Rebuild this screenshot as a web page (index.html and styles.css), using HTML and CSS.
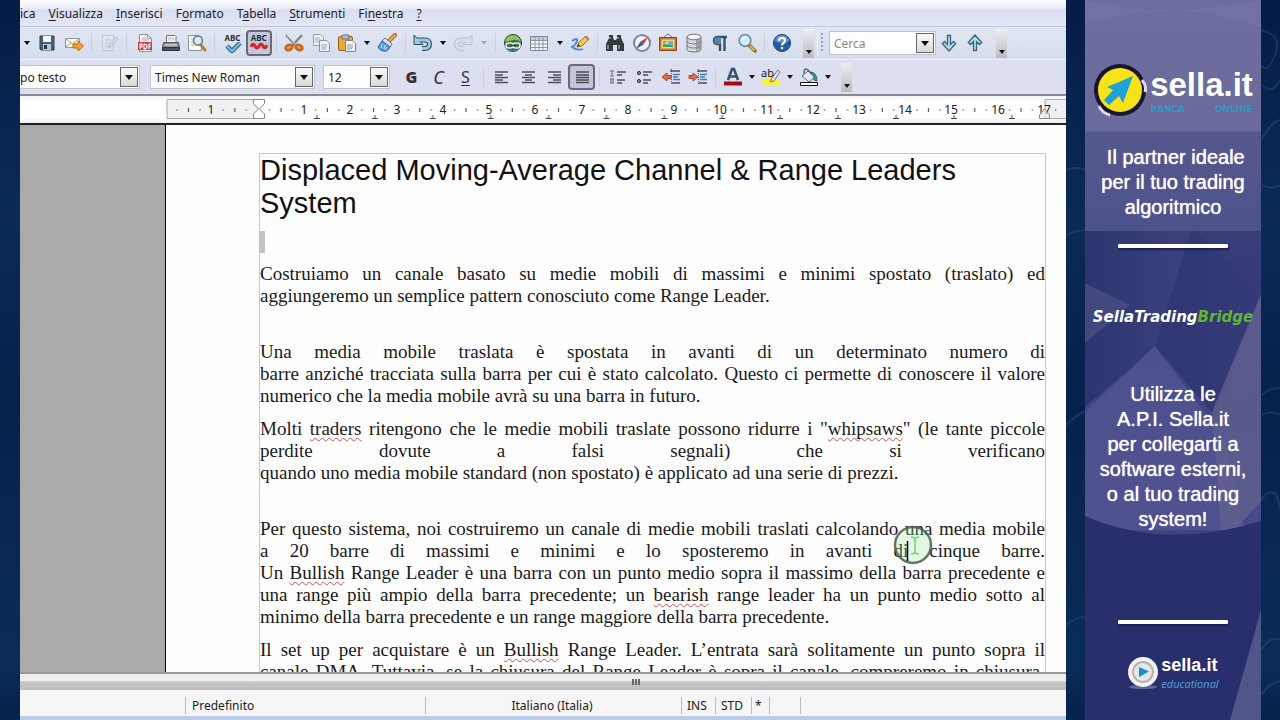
FILE: index.html
```html
<!DOCTYPE html>
<html lang="it">
<head>
<meta charset="utf-8">
<title>Displaced Moving-Average Channel</title>
<link rel="stylesheet" href="styles.css">
</head>
<body>
<div class="stage">
<main class="editor">
  <nav class="menubar">
    <button>ica</button><button><u>V</u>isualizza</button><button><u>I</u>nserisci</button><button>F<u>o</u>rmato</button><button>T<u>a</u>bella</button><button><u>S</u>trumenti</button><button>Fi<u>n</u>estra</button><button><u>?</u></button>
  </nav>

  <div class="toolbar">
    <div class="tools standard">
      <button class="drop" aria-label="Apri menu"></button>
      <button class="tool" aria-label="Salva"><svg viewBox="0 0 20 20"><path d="M3 3h14v14H4l-1-1z" fill="#476078" stroke="#2c4054"/><path d="M6 3h8v6H6z" fill="#f4f8fa"/><path d="M6 11h8v6H6z" fill="#b9c8d2"/><path d="M7 12h3v4H7z" fill="#263949"/></svg></button>
      <button class="tool" aria-label="E-mail"><svg viewBox="0 0 20 20"><path d="M1.500 5.500h14v9h-14z" fill="#fbf8ed" stroke="#9c9686"/><path d="M2 6l6.500 5L15 6M2 14l5-4.500M15 14l-5-4.500" fill="none" stroke="#aaa38f"/><path d="M9 11h5V8l5.500 5-5.500 5v-3H9z" fill="#f8a62b" stroke="#b56a12"/></svg></button>
      <span class="sep"></span>
      <button class="tool" aria-label="Modifica file"><svg viewBox="0 0 20 20" opacity=".4"><path d="M3.500 2.500h11v15h-11z" fill="#e7e9f1" stroke="#9aa0ac"/><path d="M6 7h6M6 10h5M6 13h3" stroke="#8e96a4"/><path d="M9 15l1-3 7-8 2 2-7 8z" fill="#c5cad4" stroke="#8e96a4"/></svg></button>
      <span class="sep"></span>
      <button class="tool" aria-label="Esporta PDF"><svg viewBox="0 0 20 20"><path d="M4.500 1.500h8l4 4v13h-12z" fill="#f5f5f7" stroke="#8d9098"/><path d="M12.500 1.500v4h4M7 5h4M7 7h7" fill="none" stroke="#aaa"/><path d="M3 9h14v8H3z" fill="#d7373c"/><path d="M5 16v-5h2v3H5M9 11v5q3 0 3-2.500T9 11M14 16v-5h2M14 13.500h2" fill="none" stroke="#fff" stroke-width="1.200"/></svg></button>
      <button class="tool" aria-label="Stampa"><svg viewBox="0 0 20 20"><path d="M5.500 9V2.500h8.500l1 1V9" fill="#fff" stroke="#687078"/><path d="M7 5h6M7 7h6" stroke="#bbb"/><path d="M2.500 9.500h15l1 5h-17z" fill="#8c939b" stroke="#4b535c"/><path d="M1.500 14.500h17v3h-17z" fill="#4a525a" stroke="#30363d"/><path d="M4 12h12" stroke="#e5e9ec"/></svg></button>
      <button class="tool" aria-label="Anteprima"><svg viewBox="0 0 20 20"><path d="M1.500 2.500h10l3 3v12h-13z" fill="#fbfbfb" stroke="#8e949c"/><path d="M4 6h4M4 9h3M4 12h3" stroke="#aaa"/><path d="M13 11l5 6" stroke="#b5832d" stroke-width="3" stroke-linecap="round"/><circle cx="11" cy="7.500" r="4.500" fill="#d6ebf7" stroke="#68747f" stroke-width="1.500"/></svg></button>
      <span class="sep"></span>
      <button class="tool abc" aria-label="Controllo ortografico"><span>ABC</span><svg viewBox="0 0 18 11"><path d="M3 4l5 5 8-8" fill="none" stroke="#26607e" stroke-width="4.500"/><path d="M3 4l5 5 8-8" fill="none" stroke="#74bddd" stroke-width="2.400"/></svg></button>
      <button class="tool abc on" aria-label="Controllo automatico"><span>ABC</span><svg viewBox="0 0 18 11"><path d="M1 5q2-5 4-1t4 0 4 0 4-1" fill="none" stroke="#d8232b" stroke-width="3"/></svg></button>
      <span class="sep"></span>
      <button class="tool" aria-label="Taglia"><svg viewBox="0 0 20 20"><path d="M2 2l11 12M18 2L7 14" stroke="#76808b" stroke-width="2"/><path d="M3 2l9 10" stroke="#dfe5ea"/><ellipse cx="5" cy="14.500" rx="3.500" ry="2.500" fill="#e9a25c" stroke="#c2691d" stroke-width="2.600" transform="rotate(-25 5 14.500)"/><ellipse cx="15" cy="14.500" rx="3.500" ry="2.500" fill="#e9a25c" stroke="#c2691d" stroke-width="2.600" transform="rotate(25 15 14.500)"/></svg></button>
      <button class="tool" aria-label="Copia"><svg viewBox="0 0 20 20" opacity=".8"><path d="M2.500 1.500h7l3 3v8h-10z" fill="#f5f6f8" stroke="#87909b"/><path d="M4 5h5M4 7h6M4 9h4" stroke="#9ba3ae"/><path d="M8.500 7.500h7l3 3v8h-10z" fill="#f5f6f8" stroke="#77828e"/><path d="M10 12h6M10 14h6M10 16h5" stroke="#8c97a4"/></svg></button>
      <button class="tool" aria-label="Incolla"><svg viewBox="0 0 20 20"><rect x="1.500" y="3.500" width="14" height="14" rx="1.500" fill="#e9a93b" stroke="#966018"/><path d="M5 2h7v4H5z" fill="#b7bdc3" stroke="#6e7276"/><path d="M8.500 7.500h7l3 3v8h-10z" fill="#f4f5f8" stroke="#77828e"/><path d="M10 12h6M10 14h6M10 16h5" stroke="#8c97a4"/></svg></button>
      <button class="drop" aria-label="Opzioni incolla"></button>
      <button class="tool" aria-label="Pennello"><svg viewBox="0 0 20 20"><path d="M12 8l6-6" stroke="#a66a1f" stroke-width="4" stroke-linecap="round"/><path d="M12 8l6-6" stroke="#edb34c" stroke-width="2" stroke-linecap="round"/><path d="M8 5l7 6-2 3-8-6z" fill="#d9e3ee" stroke="#62758e"/><path d="M5 8l8 6q-2 5-7 4-4-1-5-4z" fill="#5b9fdf" stroke="#2e67a6"/><path d="M5 11l-1 4M8 12l-1 4M10 14l-2 3" stroke="#c2e1fa"/></svg></button>
      <span class="sep"></span>
      <button class="tool" aria-label="Annulla"><svg viewBox="0 0 20 20"><path d="M4 7h8q4.500 0 4.500 4T12 15.500H9" fill="none" stroke="#294e6b" stroke-width="5"/><path d="M1 2v9.500h9z" fill="#9bcbe1" stroke="#294e6b"/><path d="M4 7h8q4.500 0 4.500 4T12 15.500H9" fill="none" stroke="#9bcbe1" stroke-width="2.800"/></svg></button>
      <button class="drop" aria-label="Cronologia annulla"></button>
      <button class="tool" aria-label="Ripristina" disabled><svg viewBox="0 0 20 20" opacity=".4"><path d="M16 7H8q-4.500 0-4.500 4T8 15.500h3" fill="none" stroke="#89919d" stroke-width="5"/><path d="M19 2v9.500h-9z" fill="#d6dae3" stroke="#89919d"/><path d="M16 7H8q-4.500 0-4.500 4T8 15.500h3" fill="none" stroke="#d6dae3" stroke-width="3"/></svg></button>
      <button class="drop dim" aria-label="Cronologia ripristina"></button>
      <span class="sep"></span>
      <button class="tool" aria-label="Collegamento"><svg viewBox="0 0 20 20"><circle cx="10" cy="10" r="8.500" fill="#416c55" stroke="#274631"/><path d="M2 9Q4 2 10 2t8 7q-4-3-8-2T2 9z" fill="#8cc65c"/><path d="M3 15q7 5 14 0-2 3-7 3.500T3 15z" fill="#4982ae"/><rect x="3" y="10" width="7" height="5" rx="2.500" fill="none" stroke="#e7efdf" stroke-width="1.600"/><rect x="10" y="10" width="7" height="5" rx="2.500" fill="none" stroke="#e7efdf" stroke-width="1.600"/><path d="M8 12.500h4" stroke="#203020" stroke-width="1.500"/></svg></button>
      <button class="tool" aria-label="Tabella"><svg viewBox="0 0 20 20"><path d="M1.500 3.500h17v14h-17z" fill="#fbfcfe" stroke="#7d8797"/><path d="M2 4h16v3H2z" fill="#c4cedd"/><path d="M2 7.500h16M2 11h16M2 14.500h16M6 4v13M10 4v13M14 4v13" stroke="#8b96a5"/></svg></button>
      <button class="drop" aria-label="Opzioni tabella"></button>
      <button class="tool" aria-label="Disegno"><svg viewBox="0 0 20 20"><path d="M2 8q6-4 5 0T2 14q5 4 11 2" fill="none" stroke="#4c86d3" stroke-width="1.800"/><path d="M7 14l2-5 7-6 3 3-7 7z" fill="#f5c947" stroke="#9c6f24"/><path d="M15 4l3 3 1-1-3-3z" fill="#d75f69"/><path d="M7 14l1-3 2 2z" fill="#333"/></svg></button>
      <span class="sep"></span>
      <button class="tool" aria-label="Trova"><svg viewBox="0 0 20 20"><path d="M4 2h4v3l1 2h2l1-2V2h4v3l3 6v7h-7v-6H8v6H1v-7l3-6z" fill="#343a3e"/><path d="M3 12v4M14 12v4M5 4v2M13 4v2" stroke="#9aa4aa" stroke-width="1.400"/></svg></button>
      <button class="tool" aria-label="Navigatore"><svg viewBox="0 0 20 20"><circle cx="10" cy="10" r="8" fill="#f0f5fb" stroke="#7b8894" stroke-width="2"/><path d="M16 4l-4.500 7.500-3-3z" fill="#d83c3c"/><path d="M4 16l4.500-7.500 3 3z" fill="#315b9c"/></svg></button>
      <button class="tool" aria-label="Galleria"><svg viewBox="0 0 20 20"><path d="M6 4l4-3 4 3" fill="none" stroke="#777"/><path d="M1.500 4.500h17v13h-17z" fill="#ca7730" stroke="#8a4819"/><path d="M3.500 6.500h13v9h-13z" fill="#f3d48a"/><path d="M5 8h10v6H5z" fill="#58b7e4"/><path d="M5 14v-2l4-1 6 2v1z" fill="#44a04b"/><circle cx="9" cy="10" r="1.500" fill="#f8e35e"/></svg></button>
      <button class="tool" aria-label="Sorgenti dati"><svg viewBox="0 0 20 20"><path d="M3 4v12q0 3 7 3t7-3V4z" fill="#d9dbdd" stroke="#6f7479"/><path d="M12 6v12q5-1 5-3V4z" fill="#a1a6aa"/><ellipse cx="10" cy="4" rx="7" ry="2.800" fill="#f8f8f8" stroke="#6f7479"/><path d="M3 8q1 3 7 3t7-3M3 12q1 3 7 3t7-3" fill="none" stroke="#777c80"/></svg></button>
      <button class="tool" aria-label="Caratteri non stampabili"><svg viewBox="0 0 20 20"><path d="M17 4H8Q4 4 4 7.500T8 11h2v7M14.500 4v14" fill="none" stroke="#31536a" stroke-width="2.400"/><path d="M8 4h3v7H8q-4 0-4-3.500T8 4z" fill="#5a8299"/></svg></button>
      <button class="tool" aria-label="Zoom"><svg viewBox="0 0 20 20"><path d="M12 12l6 6" stroke="#8e6324" stroke-width="3.500" stroke-linecap="round"/><path d="M13 13l4.500 4.500" stroke="#e9b34d" stroke-width="2"/><circle cx="8" cy="7.500" r="5.800" fill="#d4edfb" stroke="#6d90ae" stroke-width="1.700"/><path d="M5 7q1-3 4-3" fill="none" stroke="#fff" stroke-width="1.500"/></svg></button>
      <span class="sep"></span>
      <button class="tool" aria-label="Guida"><svg viewBox="0 0 20 20"><circle cx="10" cy="10" r="8.500" fill="#275ba5" stroke="#173b78"/><path d="M2.500 8Q4 2 10 2t7.500 6Q10 12 2.500 8z" fill="#5d8dca"/><path d="M7 8q0-3.200 3-3.200T13 7.500Q13 9 11.500 10T10 12.500M10 14v2.200" fill="none" stroke="#fff" stroke-width="2.200"/></svg></button>
    </div>
    <button class="more" aria-label="Altri comandi"></button>
    <div class="find">
      <span class="grip"></span>
      <span class="combo search"><input type="text" placeholder="Cerca" aria-label="Cerca"><span class="knob"></span></span>
      <button class="tool" aria-label="Successivo"><svg viewBox="0 0 20 20"><path d="M8.500 2.500h3v9l3-3 2.200 2L10 18l-6.700-7.500 2.200-2 3 3z" fill="#b9dceb" stroke="#39637d" stroke-width="1.300"/></svg></button>
      <button class="tool" aria-label="Precedente"><svg viewBox="0 0 20 20"><path d="M8.500 17.500h3v-9l3 3 2.200-2L10 2 3.300 9.500l2.200 2 3-3z" fill="#b9dceb" stroke="#39637d" stroke-width="1.300"/></svg></button>
    </div>
    <button class="more" aria-label="Altri comandi di ricerca"></button>
  </div>

  <div class="toolbar second">
    <span class="combo style"><select aria-label="Stile"><option>po testo</option></select><span class="knob"></span></span>
    <span class="combo font"><select aria-label="Carattere"><option>Times New Roman</option></select><span class="knob"></span></span>
    <span class="combo size"><select aria-label="Dimensione"><option>12</option></select><span class="knob"></span></span>
    <div class="tools format">
      <button class="tool letter bold">G</button><button class="tool letter italic">C</button><button class="tool letter under">S</button>
      <span class="sep"></span>
      <button class="tool" aria-label="Sinistra"><svg viewBox="0 0 20 20"><path d="M4 5h13M4 8h8M4 10.500h13M4 13h8M4 15.500h13" class="rule"/></svg></button>
      <button class="tool" aria-label="Centrato"><svg viewBox="0 0 20 20"><path d="M4 5h13M7 8h7M4 10.500h13M7 13h7M4 15.500h13" class="rule"/></svg></button>
      <button class="tool" aria-label="Destra"><svg viewBox="0 0 20 20"><path d="M3 5h13M8 8h8M3 10.500h13M8 13h8M3 15.500h13" class="rule"/></svg></button>
      <button class="tool on" aria-label="Giustificato"><svg viewBox="0 0 20 20"><path d="M4 5h13M4 8h13M4 10.500h13M4 13h13M4 15.500h13" class="rule"/></svg></button>
      <span class="sep"></span>
      <button class="tool" aria-label="Elenco numerato"><svg viewBox="0 0 20 20"><path d="M3 4h4M5 4v5M3 9h4M3 12h4M4 12v4M6 12v4M3 16h4" stroke="#667" fill="none"/><path d="M10 5h9M10 8h5M10 13h8M10 16h5" class="rule"/></svg></button>
      <button class="tool" aria-label="Elenco puntato"><svg viewBox="0 0 20 20"><circle cx="5" cy="6" r="1.600" fill="#889" stroke="#334"/><circle cx="5" cy="14" r="1.600" fill="#889" stroke="#334"/><path d="M9 5h9M9 8h5M9 13h8M9 16h5" class="rule"/></svg></button>
      <button class="tool" aria-label="Riduci rientro"><svg viewBox="0 0 20 20"><path d="M9 4h10M11 16h8" class="rule"/><path d="M12 7.500h7M12 10h5M12 12.500h7" stroke="#3f82b8" stroke-width="1.600"/><path d="M10.500 2v16" stroke="#555" stroke-dasharray="1 1"/><path d="M1 10l5-4v2.500h4v3H6V14z" fill="#df6c4e" stroke="#a74531"/></svg></button>
      <button class="tool" aria-label="Aumenta rientro"><svg viewBox="0 0 20 20"><path d="M9 4h10M11 16h8" class="rule"/><path d="M12 7.500h7M12 10h5M12 12.500h7" stroke="#3f82b8" stroke-width="1.600"/><path d="M10.500 2v16" stroke="#555" stroke-dasharray="1 1"/><path d="M10 10L5 6v2.500H1v3h4V14z" fill="#df6c4e" stroke="#a74531"/></svg></button>
      <span class="sep"></span>
      <button class="tool" aria-label="Colore carattere"><svg viewBox="0 0 20 20"><path d="M5 13l4-11h2l4 11M7 9.500h6" fill="none" stroke="#34576b" stroke-width="2.600"/><path d="M1 14.500h18v4H1z" fill="#a50b12"/></svg></button>
      <button class="drop" aria-label="Scegli colore carattere"></button>
      <button class="tool mark" aria-label="Evidenziatore"><svg viewBox="0 0 20 20"><ellipse cx="10" cy="15" rx="9.500" ry="4" fill="#fbf238"/><path d="M10 12l7-9 2 2-6 9-4 1z" fill="#e5e7eb" stroke="#687078"/><path d="M9 15l1-3 2 2z" fill="#d8b91b"/></svg><span>ab</span></button>
      <button class="drop" aria-label="Scegli evidenziatore"></button>
      <button class="tool" aria-label="Sfondo paragrafo"><svg viewBox="0 0 20 20"><path d="M5 7V4q1-3 4-1l5 5" fill="none" stroke="#555e68" stroke-width="1.300"/><path d="M3 9l6-5 7 6-6 5z" fill="#e3e9ed" stroke="#536473"/><path d="M12 5q6 1 6 9l-3-1q1-5-4-7z" fill="#3d93a0" stroke="#286270"/><path d="M1.500 15.500h17v3h-17z" fill="#fff" stroke="#111"/></svg></button>
      <button class="drop" aria-label="Scegli sfondo"></button>
    </div>
    <button class="more" aria-label="Altri comandi di formato"></button>
  </div>

  <svg class="ruler" aria-label="Righello">
    <defs>
      <pattern id="cm" x="258" y="94" width="46.250" height="29" patternUnits="userSpaceOnUse"><path d="M11.500 15v2M34.500 15v2" stroke="#777"/><path d="M23 14v4" stroke="#333"/></pattern>
      <pattern id="tabs" x="288" y="94" width="57.900" height="29" patternUnits="userSpaceOnUse"><path d="M26 24.500h6M29 21v3" stroke="#444"/></pattern>
    </defs>
    <g transform="translate(-20 -96)">
      <path d="M167 99.500h92v19h-92z" fill="#f1f1f1" stroke="#aaa"/>
      <path d="M1066 99.500h-21v19h21" fill="#f1f1f1" stroke="#aaa"/>
      <path d="M168 100h898v17H168z" fill="url(#cm)"/>
      <path d="M288 110h750v11H288z" fill="url(#tabs)"/>
      <g class="digits"><text x="211" y="114">1</text><text x="304" y="114">1</text><text x="350" y="114">2</text><text x="397" y="114">3</text><text x="443" y="114">4</text><text x="489" y="114">5</text><text x="535" y="114">6</text><text x="582" y="114">7</text><text x="628" y="114">8</text><text x="674" y="114">9</text><text x="720" y="114">10</text><text x="767" y="114">11</text><text x="813" y="114">12</text><text x="859" y="114">13</text><text x="905" y="114">14</text><text x="951" y="114">15</text><text x="998" y="114">16</text><text x="1044" y="114">17</text></g>
      <path d="M253.500 99.500h11v4l-5 5.500 5 5v4.500h-11V114l5-5-5-5.500z" fill="#fff" stroke="#888"/>
      <path d="M1039.500 118.500V115l5-6 5 6v3.500z" fill="#eee" fill-opacity=".6" stroke="#888"/>
    </g>
  </svg>

  <div class="canvas">
    <article class="page">
      <div class="frame">
        <h1>Displaced Moving-Average Channel &amp; Range Leaders<br>System</h1>
        <div class="blank"><span class="field"></span></div>
        <p><span class="line">Costruiamo un canale basato su medie mobili di massimi e minimi spostato (traslato) ed</span><span class="line end">aggiungeremo un semplice pattern conosciuto come Range Leader.</span></p>
        <p class="apart"><span class="line">Una media mobile traslata è spostata in avanti di un determinato numero di</span><span class="line">barre anziché tracciata sulla barra per cui è stato calcolato. Questo ci permette di conoscere il valore</span><span class="line end">numerico che la media mobile avrà su una barra in futuro.</span></p>
        <p><span class="line">Molti <s>traders</s> ritengono che le medie mobili traslate possono ridurre i "<s>whipsaws</s>" (le tante piccole</span><span class="line">perdite dovute a falsi segnali) che si verificano</span><span class="line end">quando uno media mobile standard (non spostato) è applicato ad una serie di prezzi.</span></p>
        <p class="apart"><span class="line">Per questo sistema, noi costruiremo un canale di medie mobili traslati calcolando una media mobile</span><span class="line">a 20 barre di massimi e minimi e lo sposteremo in avanti di cinque barre.</span><span class="line">Un <s>Bullish</s> Range Leader è una barra con un punto medio sopra il massimo della barra precedente e</span><span class="line">una range più ampio della barra precedente; un <s>bearish</s> range leader ha un punto medio sotto al</span><span class="line end">minimo della barra precedente e un range maggiore della barra precedente.</span></p>
        <p><span class="line">Il set up per acquistare è un <s>Bullish</s> Range Leader. L’entrata sarà solitamente un punto sopra il</span><span class="line">canale DMA. Tuttavia, se la chiusura del Range Leader è sopra il canale, compreremo in chiusura.</span></p>
        <svg class="pointer" viewBox="0 0 40 40"><circle cx="20" cy="20" r="18" fill="#9bea9b" fill-opacity=".28" stroke="#49604f" stroke-opacity=".85" stroke-width="2.500"/><path d="M18 12q4 0 4 3v11q0 3-4 3M26 12q-4 0-4 3v11q0 3 4 3" fill="none" stroke="#6fd37c" stroke-width="1.500"/><path d="M14.500 16v20" stroke="#000" stroke-width="1.500"/></svg>
      </div>
    </article>
  </div>

  <div class="scroll"><span class="thumb"></span></div>
  <footer class="status"><span class="c1">1</span><span class="c2">Predefinito</span><span class="c3">Italiano (Italia)</span><span class="c4">INS</span><span class="c5">STD</span><span class="c6">*</span><span class="c7"></span><span class="c8"></span></footer>
</main>

<aside class="promo">
  <svg class="swirl" viewBox="0 0 214 720" preserveAspectRatio="none"><g fill="none" stroke="#3c6d98" stroke-opacity=".28" stroke-width="2"><path d="M195 30q22 5 14 25t-14 10M195 85q12 10 19-5M195 140q10-18 19-20M195 185q10 5 19 0M0 235q8-4 19-5M0 170q10-4 19 0M0 425q10-10 19-14M195 395q10-8 19-7M195 415q10-5 19 0M195 500q15-20 19 10M0 625q9-8 19-8M195 650q10-15 19-10M195 695q9-12 19-14"/></g></svg>
  <div class="panel">
    <svg class="facets" viewBox="0 0 176 720" preserveAspectRatio="none">
      <defs><linearGradient id="base" x1="0" y1="0" x2="0" y2="1"><stop offset="0" stop-color="#6d6e9e"/><stop offset=".18" stop-color="#6b6a9c"/><stop offset=".185" stop-color="#55588e"/><stop offset=".32" stop-color="#4e528b"/><stop offset=".5" stop-color="#3d4281"/><stop offset=".72" stop-color="#484a88"/><stop offset=".8" stop-color="#292f6c"/><stop offset="1" stop-color="#272f70"/></linearGradient>
      <linearGradient id="deep" x1="0" y1="0" x2="1" y2="0"><stop offset="0" stop-color="#2c3570"/><stop offset="1" stop-color="#464a86"/></linearGradient></defs>
      <path d="M0 0h176v720H0z" fill="url(#base)"/>
      <path d="M0 0q80 20 176 0v28Q90-4 0 25z" fill="#8080aa" opacity=".25"/>
      <path d="M0 231h110l66 60v90l-45 34-60-68-71 60z" fill="url(#deep)"/>
      <path d="M0 283l45 22L0 343z" fill="#4c5088" opacity=".7"/>
      <path d="M70 346l70 94 20 90H0V412z" fill="#535591" opacity=".75"/>
      <path d="M70 346l60 70 46-121v-10L176 231h-70z" fill="#2d3370" opacity=".65"/>
      <path d="M176 294L127 412l10 130 39-40z" fill="#62628f" opacity=".75"/>
      <path d="M0 516q80 35 176 5v199H0z" fill="#292e6d"/>
      <path d="M176 610L145 720h31z" fill="#50558a"/>
    </svg>
    <div class="logo">
      <svg class="badge" viewBox="0 0 54 54"><circle cx="27" cy="27" r="26" fill="#17152f"/><circle cx="27" cy="27" r="22" fill="#f7e317"/><path d="M6 43q3 7 11 9M49 17q5 6 3 12" stroke="#ddd7f1" stroke-width="3" fill="none"/><path d="M40 13L14 24l6 3-9 10 5 5 10-9 4 7z" fill="#1ea2d8"/></svg>
      <div class="brand"><b>sella.it</b><small>BANCA ONLINE</small></div>
    </div>
    <p class="pitch">&nbsp;Il partner ideale<br>per il tuo trading<br>algoritmico</p>
    <hr>
    <div class="bridge">SellaTrading<span>Bridge</span></div>
    <p class="pitch api">Utilizza le<br>A.P.I. Sella.it<br>per collegarti a<br>software esterni,<br>o al tuo trading<br>system!</p>
    <hr>
    <div class="logo edu">
      <svg class="disc" viewBox="0 0 32 34"><ellipse cx="16" cy="31" rx="14" ry="2" fill="#9ba0c6" opacity=".5"/><circle cx="16" cy="16" r="15" fill="#f2f2f4"/><circle cx="16" cy="16" r="11" fill="#b6b3ad"/><circle cx="16" cy="16" r="9" fill="#e4e8ed"/><path d="M12 11l10 4.500L12 21z" fill="#1d8cc9"/></svg>
      <div class="brand"><b>sella.it</b><small>educational</small></div>
    </div>
  </div>
</aside>
</div>
</body>
</html>
```
FILE: styles.css
```css
* { box-sizing: border-box; }
body { margin: 0; background: #06234a; font-family: "Noto Sans", "Open Sans", sans-serif; font-size: 12px; color: #222; }
button { border: 0; padding: 0; background: none; font: inherit; color: inherit; flex: none; }
p, h1 { margin: 0; }

.stage { display: flex; height: 100vh; padding-left: 20px; overflow: hidden; background: linear-gradient(#061d45, #0a2a56 30%, #06214a 55%, #0a2c59 92%, #06214a); }
.editor { flex: 1; min-width: 0; display: flex; flex-direction: column; overflow: hidden; background: #dce1f0; }

.menubar { display: flex; gap: 13px; height: 27px; flex: none; align-items: center; background: linear-gradient(#fdfdff, #e9edf7 30%, #d9dff0 40%, #e2e6f5); border-bottom: 1px solid #c5cad8; }
.menubar u { text-underline-offset: 2px; }

.toolbar { display: flex; align-items: center; height: 33px; flex: none; background: linear-gradient(#e1e6f3, #d5dcec); border-bottom: 1px solid #edf0f8; }
.toolbar.second { height: 34px; background: #dcdff0; border: 0; }
.tools { display: flex; align-items: center; height: 100%; }
.standard { width: 775px; justify-content: space-between; }
.tool { width: 26px; height: 26px; display: flex; align-items: center; justify-content: center; }
.tool svg { width: 20px; height: 20px; display: block; }
.tool.on { background: #c3c6d8; border: 2px solid #666a7c; border-radius: 4px; }
.sep { width: 1px; height: 20px; margin: 0 4px; background: #cbd0df; }
.drop { width: 14px; height: 20px; display: flex; align-items: center; justify-content: center; }
.drop::after, .knob::after, .more::after { content: ""; border: 3px solid transparent; border-top: 4px solid #111; border-bottom: 0; }
.drop.dim::after { border-top-color: #a5a9b8; }
.abc { flex-direction: column; font: bold 8px/9px "Noto Sans", sans-serif; color: #27313c; }
.abc svg { width: 18px; height: 11px; }
.more { width: 11px; height: 29px; display: flex; justify-content: center; align-items: flex-end; padding-bottom: 4px; margin-left: 8px; background: linear-gradient(#eceef5, #bbbcc0); }
.find { display: flex; align-items: center; margin-left: 3px; padding-left: 3px; border-left: 1px solid #f1f3f9; }
.grip { width: 2px; height: 20px; margin-right: 6px; background: repeating-linear-gradient(#9da3b5 0 2px, transparent 2px 4px); }

.combo { position: relative; flex: none; height: 24px; background: #fff; border: 1px solid #c0c4d0; }
.combo select, .combo input { width: 100%; height: 100%; border: 0; padding: 0 20px 0 4px; background: transparent; appearance: none; font: inherit; color: #222; outline: 0; }
.combo input::placeholder { color: #888; opacity: 1; }
.knob { position: absolute; top: 1px; right: 1px; bottom: 1px; width: 18px; display: flex; align-items: center; justify-content: center; background: linear-gradient(#fbfbfb, #d8d8da); border: 1px solid #666; pointer-events: none; }
.knob::after { border-width: 5px 4px 0; }
.search { width: 107px; }
.style { width: 120px; border-left: 0; }
.style select { padding-left: 0; }
.font { width: 165px; margin-left: 10px; }
.size { width: 67px; margin: 0 8px; }
.format .tool { width: 27px; }
.format .drop { width: 11px; }
.format .sep { margin: 0 3px 0 4px; }
.letter { color: #333; font-size: 16px; line-height: 20px; }
.bold { font-weight: 900; }
.italic { font-style: italic; font-size: 18px; }
.under { text-decoration: underline; text-underline-offset: 2px; }
.rule { fill: none; stroke: #4a4e58; stroke-width: 1.5; }
.mark { position: relative; }
.mark span { position: absolute; left: 4px; top: 3px; font: 11px/12px "Noto Sans", sans-serif; }

.ruler { flex: none; display: block; width: 100%; height: 31px; background: linear-gradient(#f4f4f6, #fff 20%, #fff 80%, #eee); border-top: 2px solid #888a92; border-bottom: 2px solid #222; }
.digits { font-size: 12px; text-anchor: middle; fill: #222; }

.canvas { flex: 1; min-height: 0; display: flex; overflow: hidden; padding-left: 145px; background: #aaa; }
.page { flex: 1; min-width: 0; padding: 28px 20px 0 93px; background: #fefefe; border-left: 1px solid #000; }
.frame { position: relative; height: 600px; border: 1px solid #c8c8c8; color: #1a1a1a; }
h1 { font: 29px/33px "Liberation Sans", Arial, sans-serif; color: #111; white-space: nowrap; }
.blank { padding: 11px 0 10px; }
.field { display: block; width: 5px; height: 22px; background: #c3c3c3; }
.frame p { font: 19px/22px "Liberation Serif", "Times New Roman", serif; margin-bottom: 11px; }
.frame p.apart { margin-top: 34px; }
.line { display: block; text-align: justify; text-align-last: justify; white-space: nowrap; }
.line.end { text-align-last: left; }
.line s { text-decoration: underline wavy #c9505a 1px; text-underline-offset: 2px; text-decoration-skip-ink: none; }
.pointer { position: absolute; left: 633px; top: 371px; width: 40px; height: 40px; }

.scroll { flex: none; height: 18px; display: flex; justify-content: center; align-items: center; padding-left: 186px; background: linear-gradient(#eee 0 40%, #c6c6c6 50%, #bdbdbd); border-top: 2px solid #999; }
.thumb { width: 9px; height: 6px; background: repeating-linear-gradient(90deg, #666 0 2px, transparent 2px 3px); }
.status { flex: none; display: flex; align-items: center; height: 30px; padding-top: 4px; background: #f6f6f7; border-bottom: 4px solid #bccce8; }
.status span { height: 17px; line-height: 17px; border-right: 1px solid #bbb; padding-left: 5px; }
.status .c1 { width: 166px; padding: 0; text-indent: -5px; overflow: hidden; }
.status .c2 { width: 240px; padding-left: 6px; }
.status .c3 { width: 256px; text-align: center; padding: 0 3px 0 0; }
.status .c4 { width: 34px; }
.status .c5 { width: 36px; }
.status .c6 { width: 18px; padding-left: 3px; }
.status .c7 { width: 31px; }
.status .c8 { border: 0; }

.promo { position: relative; flex: none; width: 214px; padding: 0 19px; }
.swirl, .facets { position: absolute; inset: 0; width: 100%; height: 100%; }
.panel { position: relative; height: 100%; display: flex; flex-direction: column; align-items: center; color: #fff; }
.panel > :not(.facets) { position: relative; flex: none; }
.logo { display: flex; align-items: center; }
.panel > .logo { margin-top: 63px; }
.badge { width: 54px; height: 54px; margin-right: 3px; }
.brand { display: flex; flex-direction: column; }
.brand b { font: bold 33px/38px "Liberation Sans", Arial, sans-serif; }
.brand small { font: bold 9px/11px "DejaVu Sans", sans-serif; color: #3497c6; text-align: justify; text-align-last: justify; }
.pitch { font: 20px/25px "Liberation Sans", Arial, sans-serif; text-align: center; text-shadow: 0 0 1px #fff; white-space: nowrap; }
.panel > .pitch { margin-top: 28px; }
hr { width: 110px; height: 4px; margin: 24px 0 0; border: 0; border-radius: 1px; background: #fff; box-shadow: 1px 2px 2px #1b2050; }
.bridge { margin-top: 60px; font: italic bold 15px/18px "DejaVu Sans", sans-serif; white-space: nowrap; }
.bridge span { color: #62b52f; }
.panel > .api { margin-top: 56px; }
.api + hr { margin-top: 88px; }
.panel > .edu { margin-top: 31px; }
.disc { width: 32px; height: 34px; margin-right: 2px; }
.edu b { font-size: 18px; line-height: 21px; }
.edu small { font: italic 11px/15px "Open Sans", sans-serif; color: #4fa5dc; }
```
